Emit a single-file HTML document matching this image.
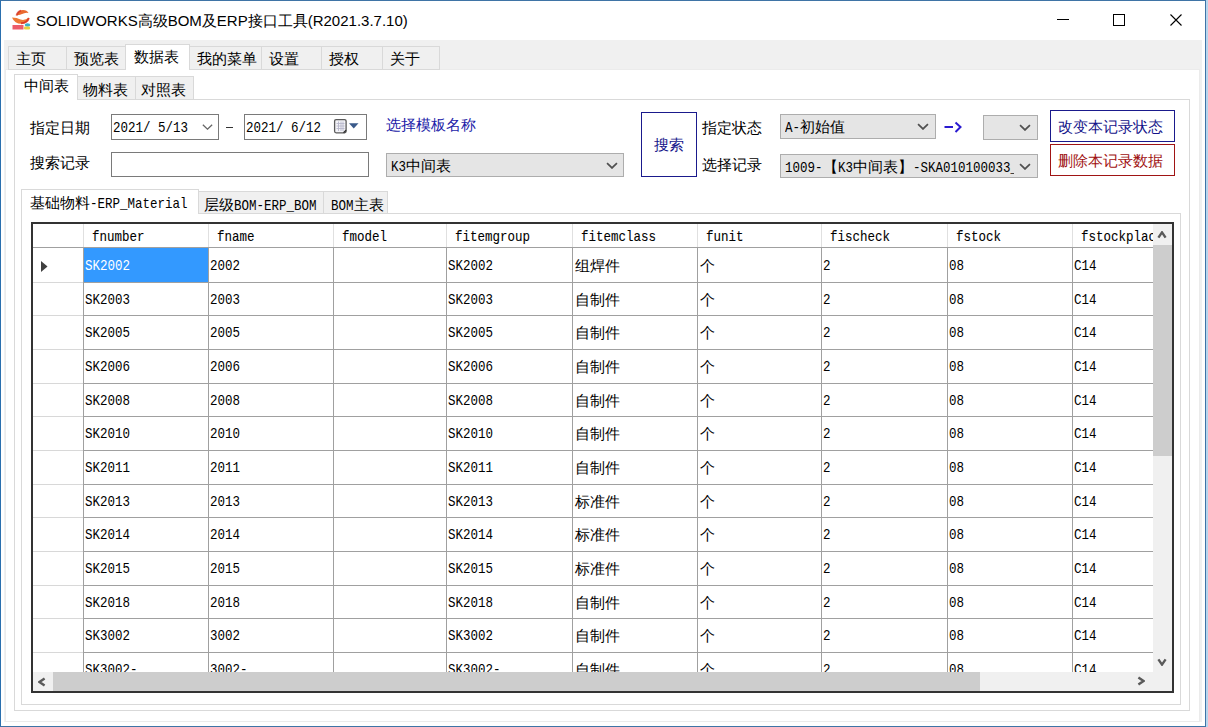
<!DOCTYPE html><html><head><meta charset="utf-8"><style>
*{box-sizing:border-box;margin:0;padding:0}
html,body{width:1208px;height:727px;overflow:hidden;background:#b8d6ee;font-family:"Liberation Sans",sans-serif;color:#000}
.a{position:absolute}
.cjk{font-size:15px;line-height:15px;white-space:nowrap}
.mono{font-family:"Liberation Mono",monospace;white-space:nowrap}
.tab{position:absolute;background:#f0f0f0;border:1px solid #d9d9d9;border-bottom:none}
.tabsel{position:absolute;background:#fff;border:1px solid #d9d9d9;border-bottom:none}
.combo{position:absolute;background:#e5e5e5;border:1px solid #adadad}
.chev{position:absolute;width:7px;height:7px;border-right:1.3px solid #555;border-bottom:1.3px solid #555;transform:rotate(45deg)}
.vl{position:absolute;width:1px;background:#a0a0a0}
.hl{position:absolute;height:1px;background:#a0a0a0}
.cell{position:absolute;font-family:"Liberation Mono",monospace;font-size:12.5px;line-height:14px;white-space:nowrap;transform-origin:0 50%}
</style></head><body>
<div class="a" style="left:0;top:0;width:1206px;height:727px;background:#fff;border:1px solid #3f74a6;border-left-color:#2a6fae"></div>
<svg class="a" style="left:8px;top:6px" width="28" height="28" viewBox="0 0 28 28">
<path d="M8.5 9.5 Q10 4 15 4 Q19 4 20.5 7 Q18 6.5 15.5 7.5 Q12 9 8.5 9.5 Z" fill="#ea6a30"/>
<path d="M8.5 9.5 Q9.5 5.5 13 4.6" stroke="#d42a1e" stroke-width="1.8" fill="none" opacity=".75"/>
<path d="M4 11.5 Q9 11.5 12.5 13.5 Q16.5 15 21 11.5 Q20.5 17.5 13.5 17.8 Q6.5 17.8 4 11.5 Z" fill="#ee7a34"/>
<path d="M13 17.3 Q19.5 17 20.8 12" stroke="#d82a1e" stroke-width="2" fill="none" opacity=".8"/>
<rect x="4.5" y="19" width="11" height="4.5" fill="#ea4a5a" opacity=".9"/>
<ellipse cx="19.5" cy="19" rx="2.8" ry="1.8" fill="#3ab0c8"/>
<rect x="16" y="20.5" width="6" height="3" rx="1" fill="#e8d040"/>
</svg>
<div class="a" style="left:36px;top:13px;font-size:15px;line-height:15px;white-space:nowrap;color:#000">SOLIDWORKS高级BOM及ERP接口工具(R2021.3.7.10)</div>
<div class="a" style="left:1057px;top:19px;width:12px;height:1px;background:#000"></div>
<div class="a" style="left:1113px;top:14px;width:12px;height:12px;border:1px solid #000"></div>
<svg class="a" style="left:1170px;top:14px" width="12" height="12"><path d="M0.5 0.5 L11.5 11.5 M11.5 0.5 L0.5 11.5" stroke="#000" stroke-width="1.1"/></svg>
<div class="a" style="left:4px;top:40px;width:1198px;height:685px;background:#f0f0f0"></div>
<div class="a" style="left:5px;top:69px;width:1195px;height:653px;background:#fff;border:1px solid #ebebeb"></div>
<div class="a" style="left:1px;top:722px;width:1204px;height:4px;background:#fff"></div>
<div class="tab" style="left:8px;top:46px;width:59px;height:24px;border-bottom:1px solid #d9d9d9"></div>
<div class="a cjk" style="left:16px;top:51px">主页</div>
<div class="tab" style="left:66px;top:46px;width:61px;height:24px;border-bottom:1px solid #d9d9d9"></div>
<div class="a cjk" style="left:74px;top:51px">预览表</div>
<div class="tabsel" style="left:125px;top:44px;width:65px;height:26px"></div>
<div class="a cjk" style="left:134px;top:49px">数据表</div>
<div class="tab" style="left:189px;top:46px;width:73px;height:24px;border-bottom:1px solid #d9d9d9"></div>
<div class="a cjk" style="left:197px;top:51px">我的菜单</div>
<div class="tab" style="left:261px;top:46px;width:61px;height:24px;border-bottom:1px solid #d9d9d9"></div>
<div class="a cjk" style="left:269px;top:51px">设置</div>
<div class="tab" style="left:321px;top:46px;width:62px;height:24px;border-bottom:1px solid #d9d9d9"></div>
<div class="a cjk" style="left:329px;top:51px">授权</div>
<div class="tab" style="left:382px;top:46px;width:58px;height:24px;border-bottom:1px solid #d9d9d9"></div>
<div class="a cjk" style="left:390px;top:51px">关于</div>
<div class="a" style="left:14px;top:99px;width:1176px;height:612px;background:#fff;border:1px solid #d9d9d9"></div>
<div class="tabsel" style="left:14px;top:74px;width:64px;height:26px"></div>
<div class="a cjk" style="left:24px;top:78px">中间表</div>
<div class="tab" style="left:77px;top:76px;width:59px;height:24px;border-bottom:1px solid #d9d9d9"></div>
<div class="a cjk" style="left:83px;top:82px">物料表</div>
<div class="tab" style="left:135px;top:76px;width:59px;height:24px;border-bottom:1px solid #d9d9d9"></div>
<div class="a cjk" style="left:141px;top:82px">对照表</div>
<div class="a cjk" style="left:30px;top:120px">指定日期</div>
<div class="a cjk" style="left:30px;top:155px">搜索记录</div>
<div class="a" style="left:111px;top:114px;width:108px;height:26px;border:1px solid #7a7a7a;background:#fff"></div>
<div class="a" style="left:113px;top:118px;line-height:17px;white-space:pre"><span style="display:inline-block;font-family:'Liberation Mono',monospace;font-size:15px;transform:scaleX(0.8333);transform-origin:0 0;margin-right:-15.00px;">2021/ 5/13</span></div>
<svg class="a" style="left:202px;top:124px" width="11" height="6"><polyline points="0.8500000000000001,0.8500000000000001 5.5,5.15 10.15,0.8500000000000001" fill="none" stroke="#666" stroke-width="1.3"/></svg>
<div class="a" style="left:226px;top:127px;width:7px;height:1.3px;background:#333"></div>
<div class="a" style="left:244px;top:114px;width:123px;height:26px;border:1px solid #7a7a7a;background:#fff"></div>
<div class="a" style="left:246px;top:118px;line-height:17px;white-space:pre"><span style="display:inline-block;font-family:'Liberation Mono',monospace;font-size:15px;transform:scaleX(0.8333);transform-origin:0 0;margin-right:-15.00px;">2021/ 6/12</span></div>
<svg class="a" style="left:333px;top:118px" width="16" height="17"><rect x="1.6" y="1.6" width="11.5" height="13.2" rx="1.5" fill="#f4f4f8" stroke="#5a5a5a" stroke-width="1.3"/><path d="M3.5 5.5H11.5M3.5 8H11.5M3.5 10.5H11.5M5.5 3.5V13M8 3.5V13M10 3.5V13" stroke="#b8b8cc" stroke-width="0.9"/><path d="M10.5 14.8L13.1 12.2" stroke="#333" stroke-width="1.4"/></svg>
<svg class="a" style="left:349px;top:123px" width="10" height="6"><path d="M0 0.3 L9.5 0.3 L4.75 5.5 Z" fill="#3a5a8a"/></svg>
<div class="a" style="left:111px;top:152px;width:258px;height:25px;border:1px solid #7a7a7a;background:#fff"></div>
<div class="a cjk" style="left:386px;top:117px;color:#1c1ca8">选择模板名称</div>
<div class="combo" style="left:386px;top:153px;width:238px;height:24px"></div>
<div class="a" style="left:391px;top:157px;font-size:15px;line-height:17px;white-space:pre"><span style="display:inline-block;font-family:'Liberation Mono',monospace;font-size:15px;transform:scaleX(0.8333);transform-origin:0 0;margin-right:-3.00px;">K3</span>中间表</div>
<svg class="a" style="left:606px;top:162px" width="12" height="7"><polyline points="1.05,1.05 6.0,5.95 10.95,1.05" fill="none" stroke="#505050" stroke-width="1.7"/></svg>
<div class="a" style="left:641px;top:112px;width:56px;height:65px;border:1px solid #1a1a8c;background:#fff"></div>
<div class="a cjk" style="left:654px;top:137px;color:#14148a">搜索</div>
<div class="a cjk" style="left:702px;top:120px">指定状态</div>
<div class="a cjk" style="left:702px;top:157px">选择记录</div>
<div class="combo" style="left:780px;top:114px;width:156px;height:25px"></div>
<div class="a" style="left:785px;top:119px;font-size:15px;line-height:15px;white-space:nowrap"><span style="display:inline-block;font-family:'Liberation Mono',monospace;font-size:15px;transform:scaleX(0.8333);transform-origin:0 0;margin-right:-3.00px;">A-</span>初始值</div>
<svg class="a" style="left:917px;top:123px" width="12" height="7"><polyline points="1.05,1.05 6.0,5.95 10.95,1.05" fill="none" stroke="#505050" stroke-width="1.7"/></svg>
<svg class="a" style="left:943px;top:121px" width="20" height="13"><path d="M1.5 6 H10" stroke="#2a1ad0" stroke-width="2"/><polyline points="12.5,1.5 17.5,6 12.5,11" fill="none" stroke="#2a1ad0" stroke-width="2"/></svg>
<div class="combo" style="left:983px;top:115px;width:55px;height:25px"></div>
<svg class="a" style="left:1019px;top:124px" width="12" height="7"><polyline points="1.05,1.05 6.0,5.95 10.95,1.05" fill="none" stroke="#505050" stroke-width="1.7"/></svg>
<div class="combo" style="left:780px;top:154px;width:258px;height:24px"></div>
<div class="a" style="left:785px;top:159px;width:229px;overflow:hidden;font-size:15px;line-height:15px;white-space:nowrap"><span style="display:inline-block;font-family:'Liberation Mono',monospace;font-size:15px;transform:scaleX(0.8333);transform-origin:0 0;margin-right:-7.50px;">1009-</span>【<span style="display:inline-block;font-family:'Liberation Mono',monospace;font-size:15px;transform:scaleX(0.8333);transform-origin:0 0;margin-right:-3.00px;">K3</span>中间表】<span style="display:inline-block;font-family:'Liberation Mono',monospace;font-size:15px;transform:scaleX(0.8333);transform-origin:0 0;margin-right:-21.00px;">-SKA010100033_</span></div>
<svg class="a" style="left:1019px;top:163px" width="12" height="7"><polyline points="1.05,1.05 6.0,5.95 10.95,1.05" fill="none" stroke="#505050" stroke-width="1.7"/></svg>
<div class="a" style="left:1050px;top:110px;width:125px;height:32px;border:1px solid #1a1a8c;background:#fff"></div>
<div class="a cjk" style="left:1058px;top:119px;color:#14148a">改变本记录状态</div>
<div class="a" style="left:1050px;top:144px;width:125px;height:32px;border:1px solid #a01414;background:#fff"></div>
<div class="a cjk" style="left:1058px;top:153px;color:#a01010">删除本记录数据</div>
<div class="a" style="left:21px;top:213px;width:1160px;height:492px;background:#fff;border:1px solid #d9d9d9"></div>
<div class="tabsel" style="left:21px;top:189px;width:178px;height:25px"></div>
<div class="a" style="left:30px;top:195px;font-size:15px;line-height:15px;white-space:nowrap">基础物料<span style="display:inline-block;font-family:'Liberation Mono',monospace;font-size:15px;transform:scaleX(0.8333);transform-origin:0 0;margin-right:-19.50px;">-ERP_Material</span></div>
<div class="tab" style="left:198px;top:191px;width:126px;height:23px;border-bottom:1px solid #d9d9d9"></div>
<div class="a" style="left:204px;top:197px;font-size:15px;line-height:15px;white-space:nowrap">层级<span style="display:inline-block;font-family:'Liberation Mono',monospace;font-size:15px;transform:scaleX(0.8333);transform-origin:0 0;margin-right:-16.50px;">BOM-ERP_BOM</span></div>
<div class="tab" style="left:323px;top:191px;width:65px;height:23px;border-bottom:1px solid #d9d9d9"></div>
<div class="a" style="left:331px;top:197px;font-size:15px;line-height:15px;white-space:nowrap"><span style="display:inline-block;font-family:'Liberation Mono',monospace;font-size:15px;transform:scaleX(0.8333);transform-origin:0 0;margin-right:-4.50px;">BOM</span>主表</div>
<div class="a" style="left:31px;top:222px;width:1143px;height:471px;background:#fff;border:2px solid #333"></div>
<div class="vl" style="left:83px;top:224px;height:24px;background:#e0e0e0"></div>
<div class="vl" style="left:208px;top:224px;height:24px;background:#e0e0e0"></div>
<div class="vl" style="left:333px;top:224px;height:24px;background:#e0e0e0"></div>
<div class="vl" style="left:446px;top:224px;height:24px;background:#e0e0e0"></div>
<div class="vl" style="left:572px;top:224px;height:24px;background:#e0e0e0"></div>
<div class="vl" style="left:697px;top:224px;height:24px;background:#e0e0e0"></div>
<div class="vl" style="left:821px;top:224px;height:24px;background:#e0e0e0"></div>
<div class="vl" style="left:947px;top:224px;height:24px;background:#e0e0e0"></div>
<div class="vl" style="left:1072px;top:224px;height:24px;background:#e0e0e0"></div>
<div class="hl" style="left:33px;top:247px;width:1120px;background:#a0a0a0"></div>
<div class="a" style="left:92px;top:227px;line-height:17px;white-space:pre"><span style="display:inline-block;font-family:'Liberation Mono',monospace;font-size:15px;transform:scaleX(0.8333);transform-origin:0 0;margin-right:-10.50px;font-weight:normal;-webkit-text-stroke:0.1px #000">fnumber</span></div>
<div class="a" style="left:217px;top:227px;line-height:17px;white-space:pre"><span style="display:inline-block;font-family:'Liberation Mono',monospace;font-size:15px;transform:scaleX(0.8333);transform-origin:0 0;margin-right:-7.50px;font-weight:normal;-webkit-text-stroke:0.1px #000">fname</span></div>
<div class="a" style="left:342px;top:227px;line-height:17px;white-space:pre"><span style="display:inline-block;font-family:'Liberation Mono',monospace;font-size:15px;transform:scaleX(0.8333);transform-origin:0 0;margin-right:-9.00px;font-weight:normal;-webkit-text-stroke:0.1px #000">fmodel</span></div>
<div class="a" style="left:455px;top:227px;line-height:17px;white-space:pre"><span style="display:inline-block;font-family:'Liberation Mono',monospace;font-size:15px;transform:scaleX(0.8333);transform-origin:0 0;margin-right:-15.00px;font-weight:normal;-webkit-text-stroke:0.1px #000">fitemgroup</span></div>
<div class="a" style="left:581px;top:227px;line-height:17px;white-space:pre"><span style="display:inline-block;font-family:'Liberation Mono',monospace;font-size:15px;transform:scaleX(0.8333);transform-origin:0 0;margin-right:-15.00px;font-weight:normal;-webkit-text-stroke:0.1px #000">fitemclass</span></div>
<div class="a" style="left:706px;top:227px;line-height:17px;white-space:pre"><span style="display:inline-block;font-family:'Liberation Mono',monospace;font-size:15px;transform:scaleX(0.8333);transform-origin:0 0;margin-right:-7.50px;font-weight:normal;-webkit-text-stroke:0.1px #000">funit</span></div>
<div class="a" style="left:830px;top:227px;line-height:17px;white-space:pre"><span style="display:inline-block;font-family:'Liberation Mono',monospace;font-size:15px;transform:scaleX(0.8333);transform-origin:0 0;margin-right:-12.00px;font-weight:normal;-webkit-text-stroke:0.1px #000">fischeck</span></div>
<div class="a" style="left:956px;top:227px;line-height:17px;white-space:pre"><span style="display:inline-block;font-family:'Liberation Mono',monospace;font-size:15px;transform:scaleX(0.8333);transform-origin:0 0;margin-right:-9.00px;font-weight:normal;-webkit-text-stroke:0.1px #000">fstock</span></div>
<div class="a" style="left:1081px;top:227px;line-height:17px;white-space:pre"><span style="display:inline-block;font-family:'Liberation Mono',monospace;font-size:15px;transform:scaleX(0.8333);transform-origin:0 0;margin-right:-16.50px;font-weight:normal;-webkit-text-stroke:0.1px #000">fstockplace</span></div>
<div class="a" style="left:83px;top:248px;width:125px;height:34px;background:#3399ff"></div>
<svg class="a" style="left:41px;top:261px" width="7" height="11"><path d="M0 0 L6.5 5.5 L0 11 Z" fill="#404040"/></svg>
<div class="a" style="left:85px;top:256px;line-height:17px;white-space:pre;color:#fff"><span style="display:inline-block;font-family:'Liberation Mono',monospace;font-size:15px;transform:scaleX(0.8333);transform-origin:0 0;margin-right:-9.00px;">SK2002</span></div>
<div class="a" style="left:210px;top:256px;line-height:17px;white-space:pre;color:#000"><span style="display:inline-block;font-family:'Liberation Mono',monospace;font-size:15px;transform:scaleX(0.8333);transform-origin:0 0;margin-right:-6.00px;">2002</span></div>
<div class="a" style="left:335px;top:256px;line-height:17px;white-space:pre;color:#000"><span style="display:inline-block;font-family:'Liberation Mono',monospace;font-size:15px;transform:scaleX(0.8333);transform-origin:0 0;margin-right:-0.00px;"></span></div>
<div class="a" style="left:448px;top:256px;line-height:17px;white-space:pre;color:#000"><span style="display:inline-block;font-family:'Liberation Mono',monospace;font-size:15px;transform:scaleX(0.8333);transform-origin:0 0;margin-right:-9.00px;">SK2002</span></div>
<div class="a cjk" style="left:575px;top:258px;color:#000">组焊件</div>
<div class="a cjk" style="left:700px;top:258px;color:#000">个</div>
<div class="a" style="left:823px;top:256px;line-height:17px;white-space:pre;color:#000"><span style="display:inline-block;font-family:'Liberation Mono',monospace;font-size:15px;transform:scaleX(0.8333);transform-origin:0 0;margin-right:-1.50px;">2</span></div>
<div class="a" style="left:949px;top:256px;line-height:17px;white-space:pre;color:#000"><span style="display:inline-block;font-family:'Liberation Mono',monospace;font-size:15px;transform:scaleX(0.8333);transform-origin:0 0;margin-right:-3.00px;">08</span></div>
<div class="a" style="left:1074px;top:256px;line-height:17px;white-space:pre;color:#000"><span style="display:inline-block;font-family:'Liberation Mono',monospace;font-size:15px;transform:scaleX(0.8333);transform-origin:0 0;margin-right:-4.50px;">C14</span></div>
<div class="hl" style="left:33px;top:282px;width:50px;background:#d8d8d8"></div>
<div class="hl" style="left:83px;top:282px;width:1070px"></div>
<div class="a" style="left:85px;top:290px;line-height:17px;white-space:pre;color:#000"><span style="display:inline-block;font-family:'Liberation Mono',monospace;font-size:15px;transform:scaleX(0.8333);transform-origin:0 0;margin-right:-9.00px;">SK2003</span></div>
<div class="a" style="left:210px;top:290px;line-height:17px;white-space:pre;color:#000"><span style="display:inline-block;font-family:'Liberation Mono',monospace;font-size:15px;transform:scaleX(0.8333);transform-origin:0 0;margin-right:-6.00px;">2003</span></div>
<div class="a" style="left:335px;top:290px;line-height:17px;white-space:pre;color:#000"><span style="display:inline-block;font-family:'Liberation Mono',monospace;font-size:15px;transform:scaleX(0.8333);transform-origin:0 0;margin-right:-0.00px;"></span></div>
<div class="a" style="left:448px;top:290px;line-height:17px;white-space:pre;color:#000"><span style="display:inline-block;font-family:'Liberation Mono',monospace;font-size:15px;transform:scaleX(0.8333);transform-origin:0 0;margin-right:-9.00px;">SK2003</span></div>
<div class="a cjk" style="left:575px;top:292px;color:#000">自制件</div>
<div class="a cjk" style="left:700px;top:292px;color:#000">个</div>
<div class="a" style="left:823px;top:290px;line-height:17px;white-space:pre;color:#000"><span style="display:inline-block;font-family:'Liberation Mono',monospace;font-size:15px;transform:scaleX(0.8333);transform-origin:0 0;margin-right:-1.50px;">2</span></div>
<div class="a" style="left:949px;top:290px;line-height:17px;white-space:pre;color:#000"><span style="display:inline-block;font-family:'Liberation Mono',monospace;font-size:15px;transform:scaleX(0.8333);transform-origin:0 0;margin-right:-3.00px;">08</span></div>
<div class="a" style="left:1074px;top:290px;line-height:17px;white-space:pre;color:#000"><span style="display:inline-block;font-family:'Liberation Mono',monospace;font-size:15px;transform:scaleX(0.8333);transform-origin:0 0;margin-right:-4.50px;">C14</span></div>
<div class="hl" style="left:33px;top:315px;width:50px;background:#d8d8d8"></div>
<div class="hl" style="left:83px;top:315px;width:1070px"></div>
<div class="a" style="left:85px;top:323px;line-height:17px;white-space:pre;color:#000"><span style="display:inline-block;font-family:'Liberation Mono',monospace;font-size:15px;transform:scaleX(0.8333);transform-origin:0 0;margin-right:-9.00px;">SK2005</span></div>
<div class="a" style="left:210px;top:323px;line-height:17px;white-space:pre;color:#000"><span style="display:inline-block;font-family:'Liberation Mono',monospace;font-size:15px;transform:scaleX(0.8333);transform-origin:0 0;margin-right:-6.00px;">2005</span></div>
<div class="a" style="left:335px;top:323px;line-height:17px;white-space:pre;color:#000"><span style="display:inline-block;font-family:'Liberation Mono',monospace;font-size:15px;transform:scaleX(0.8333);transform-origin:0 0;margin-right:-0.00px;"></span></div>
<div class="a" style="left:448px;top:323px;line-height:17px;white-space:pre;color:#000"><span style="display:inline-block;font-family:'Liberation Mono',monospace;font-size:15px;transform:scaleX(0.8333);transform-origin:0 0;margin-right:-9.00px;">SK2005</span></div>
<div class="a cjk" style="left:575px;top:325px;color:#000">自制件</div>
<div class="a cjk" style="left:700px;top:325px;color:#000">个</div>
<div class="a" style="left:823px;top:323px;line-height:17px;white-space:pre;color:#000"><span style="display:inline-block;font-family:'Liberation Mono',monospace;font-size:15px;transform:scaleX(0.8333);transform-origin:0 0;margin-right:-1.50px;">2</span></div>
<div class="a" style="left:949px;top:323px;line-height:17px;white-space:pre;color:#000"><span style="display:inline-block;font-family:'Liberation Mono',monospace;font-size:15px;transform:scaleX(0.8333);transform-origin:0 0;margin-right:-3.00px;">08</span></div>
<div class="a" style="left:1074px;top:323px;line-height:17px;white-space:pre;color:#000"><span style="display:inline-block;font-family:'Liberation Mono',monospace;font-size:15px;transform:scaleX(0.8333);transform-origin:0 0;margin-right:-4.50px;">C14</span></div>
<div class="hl" style="left:33px;top:349px;width:50px;background:#d8d8d8"></div>
<div class="hl" style="left:83px;top:349px;width:1070px"></div>
<div class="a" style="left:85px;top:357px;line-height:17px;white-space:pre;color:#000"><span style="display:inline-block;font-family:'Liberation Mono',monospace;font-size:15px;transform:scaleX(0.8333);transform-origin:0 0;margin-right:-9.00px;">SK2006</span></div>
<div class="a" style="left:210px;top:357px;line-height:17px;white-space:pre;color:#000"><span style="display:inline-block;font-family:'Liberation Mono',monospace;font-size:15px;transform:scaleX(0.8333);transform-origin:0 0;margin-right:-6.00px;">2006</span></div>
<div class="a" style="left:335px;top:357px;line-height:17px;white-space:pre;color:#000"><span style="display:inline-block;font-family:'Liberation Mono',monospace;font-size:15px;transform:scaleX(0.8333);transform-origin:0 0;margin-right:-0.00px;"></span></div>
<div class="a" style="left:448px;top:357px;line-height:17px;white-space:pre;color:#000"><span style="display:inline-block;font-family:'Liberation Mono',monospace;font-size:15px;transform:scaleX(0.8333);transform-origin:0 0;margin-right:-9.00px;">SK2006</span></div>
<div class="a cjk" style="left:575px;top:359px;color:#000">自制件</div>
<div class="a cjk" style="left:700px;top:359px;color:#000">个</div>
<div class="a" style="left:823px;top:357px;line-height:17px;white-space:pre;color:#000"><span style="display:inline-block;font-family:'Liberation Mono',monospace;font-size:15px;transform:scaleX(0.8333);transform-origin:0 0;margin-right:-1.50px;">2</span></div>
<div class="a" style="left:949px;top:357px;line-height:17px;white-space:pre;color:#000"><span style="display:inline-block;font-family:'Liberation Mono',monospace;font-size:15px;transform:scaleX(0.8333);transform-origin:0 0;margin-right:-3.00px;">08</span></div>
<div class="a" style="left:1074px;top:357px;line-height:17px;white-space:pre;color:#000"><span style="display:inline-block;font-family:'Liberation Mono',monospace;font-size:15px;transform:scaleX(0.8333);transform-origin:0 0;margin-right:-4.50px;">C14</span></div>
<div class="hl" style="left:33px;top:383px;width:50px;background:#d8d8d8"></div>
<div class="hl" style="left:83px;top:383px;width:1070px"></div>
<div class="a" style="left:85px;top:391px;line-height:17px;white-space:pre;color:#000"><span style="display:inline-block;font-family:'Liberation Mono',monospace;font-size:15px;transform:scaleX(0.8333);transform-origin:0 0;margin-right:-9.00px;">SK2008</span></div>
<div class="a" style="left:210px;top:391px;line-height:17px;white-space:pre;color:#000"><span style="display:inline-block;font-family:'Liberation Mono',monospace;font-size:15px;transform:scaleX(0.8333);transform-origin:0 0;margin-right:-6.00px;">2008</span></div>
<div class="a" style="left:335px;top:391px;line-height:17px;white-space:pre;color:#000"><span style="display:inline-block;font-family:'Liberation Mono',monospace;font-size:15px;transform:scaleX(0.8333);transform-origin:0 0;margin-right:-0.00px;"></span></div>
<div class="a" style="left:448px;top:391px;line-height:17px;white-space:pre;color:#000"><span style="display:inline-block;font-family:'Liberation Mono',monospace;font-size:15px;transform:scaleX(0.8333);transform-origin:0 0;margin-right:-9.00px;">SK2008</span></div>
<div class="a cjk" style="left:575px;top:393px;color:#000">自制件</div>
<div class="a cjk" style="left:700px;top:393px;color:#000">个</div>
<div class="a" style="left:823px;top:391px;line-height:17px;white-space:pre;color:#000"><span style="display:inline-block;font-family:'Liberation Mono',monospace;font-size:15px;transform:scaleX(0.8333);transform-origin:0 0;margin-right:-1.50px;">2</span></div>
<div class="a" style="left:949px;top:391px;line-height:17px;white-space:pre;color:#000"><span style="display:inline-block;font-family:'Liberation Mono',monospace;font-size:15px;transform:scaleX(0.8333);transform-origin:0 0;margin-right:-3.00px;">08</span></div>
<div class="a" style="left:1074px;top:391px;line-height:17px;white-space:pre;color:#000"><span style="display:inline-block;font-family:'Liberation Mono',monospace;font-size:15px;transform:scaleX(0.8333);transform-origin:0 0;margin-right:-4.50px;">C14</span></div>
<div class="hl" style="left:33px;top:416px;width:50px;background:#d8d8d8"></div>
<div class="hl" style="left:83px;top:416px;width:1070px"></div>
<div class="a" style="left:85px;top:424px;line-height:17px;white-space:pre;color:#000"><span style="display:inline-block;font-family:'Liberation Mono',monospace;font-size:15px;transform:scaleX(0.8333);transform-origin:0 0;margin-right:-9.00px;">SK2010</span></div>
<div class="a" style="left:210px;top:424px;line-height:17px;white-space:pre;color:#000"><span style="display:inline-block;font-family:'Liberation Mono',monospace;font-size:15px;transform:scaleX(0.8333);transform-origin:0 0;margin-right:-6.00px;">2010</span></div>
<div class="a" style="left:335px;top:424px;line-height:17px;white-space:pre;color:#000"><span style="display:inline-block;font-family:'Liberation Mono',monospace;font-size:15px;transform:scaleX(0.8333);transform-origin:0 0;margin-right:-0.00px;"></span></div>
<div class="a" style="left:448px;top:424px;line-height:17px;white-space:pre;color:#000"><span style="display:inline-block;font-family:'Liberation Mono',monospace;font-size:15px;transform:scaleX(0.8333);transform-origin:0 0;margin-right:-9.00px;">SK2010</span></div>
<div class="a cjk" style="left:575px;top:426px;color:#000">自制件</div>
<div class="a cjk" style="left:700px;top:426px;color:#000">个</div>
<div class="a" style="left:823px;top:424px;line-height:17px;white-space:pre;color:#000"><span style="display:inline-block;font-family:'Liberation Mono',monospace;font-size:15px;transform:scaleX(0.8333);transform-origin:0 0;margin-right:-1.50px;">2</span></div>
<div class="a" style="left:949px;top:424px;line-height:17px;white-space:pre;color:#000"><span style="display:inline-block;font-family:'Liberation Mono',monospace;font-size:15px;transform:scaleX(0.8333);transform-origin:0 0;margin-right:-3.00px;">08</span></div>
<div class="a" style="left:1074px;top:424px;line-height:17px;white-space:pre;color:#000"><span style="display:inline-block;font-family:'Liberation Mono',monospace;font-size:15px;transform:scaleX(0.8333);transform-origin:0 0;margin-right:-4.50px;">C14</span></div>
<div class="hl" style="left:33px;top:450px;width:50px;background:#d8d8d8"></div>
<div class="hl" style="left:83px;top:450px;width:1070px"></div>
<div class="a" style="left:85px;top:458px;line-height:17px;white-space:pre;color:#000"><span style="display:inline-block;font-family:'Liberation Mono',monospace;font-size:15px;transform:scaleX(0.8333);transform-origin:0 0;margin-right:-9.00px;">SK2011</span></div>
<div class="a" style="left:210px;top:458px;line-height:17px;white-space:pre;color:#000"><span style="display:inline-block;font-family:'Liberation Mono',monospace;font-size:15px;transform:scaleX(0.8333);transform-origin:0 0;margin-right:-6.00px;">2011</span></div>
<div class="a" style="left:335px;top:458px;line-height:17px;white-space:pre;color:#000"><span style="display:inline-block;font-family:'Liberation Mono',monospace;font-size:15px;transform:scaleX(0.8333);transform-origin:0 0;margin-right:-0.00px;"></span></div>
<div class="a" style="left:448px;top:458px;line-height:17px;white-space:pre;color:#000"><span style="display:inline-block;font-family:'Liberation Mono',monospace;font-size:15px;transform:scaleX(0.8333);transform-origin:0 0;margin-right:-9.00px;">SK2011</span></div>
<div class="a cjk" style="left:575px;top:460px;color:#000">自制件</div>
<div class="a cjk" style="left:700px;top:460px;color:#000">个</div>
<div class="a" style="left:823px;top:458px;line-height:17px;white-space:pre;color:#000"><span style="display:inline-block;font-family:'Liberation Mono',monospace;font-size:15px;transform:scaleX(0.8333);transform-origin:0 0;margin-right:-1.50px;">2</span></div>
<div class="a" style="left:949px;top:458px;line-height:17px;white-space:pre;color:#000"><span style="display:inline-block;font-family:'Liberation Mono',monospace;font-size:15px;transform:scaleX(0.8333);transform-origin:0 0;margin-right:-3.00px;">08</span></div>
<div class="a" style="left:1074px;top:458px;line-height:17px;white-space:pre;color:#000"><span style="display:inline-block;font-family:'Liberation Mono',monospace;font-size:15px;transform:scaleX(0.8333);transform-origin:0 0;margin-right:-4.50px;">C14</span></div>
<div class="hl" style="left:33px;top:484px;width:50px;background:#d8d8d8"></div>
<div class="hl" style="left:83px;top:484px;width:1070px"></div>
<div class="a" style="left:85px;top:492px;line-height:17px;white-space:pre;color:#000"><span style="display:inline-block;font-family:'Liberation Mono',monospace;font-size:15px;transform:scaleX(0.8333);transform-origin:0 0;margin-right:-9.00px;">SK2013</span></div>
<div class="a" style="left:210px;top:492px;line-height:17px;white-space:pre;color:#000"><span style="display:inline-block;font-family:'Liberation Mono',monospace;font-size:15px;transform:scaleX(0.8333);transform-origin:0 0;margin-right:-6.00px;">2013</span></div>
<div class="a" style="left:335px;top:492px;line-height:17px;white-space:pre;color:#000"><span style="display:inline-block;font-family:'Liberation Mono',monospace;font-size:15px;transform:scaleX(0.8333);transform-origin:0 0;margin-right:-0.00px;"></span></div>
<div class="a" style="left:448px;top:492px;line-height:17px;white-space:pre;color:#000"><span style="display:inline-block;font-family:'Liberation Mono',monospace;font-size:15px;transform:scaleX(0.8333);transform-origin:0 0;margin-right:-9.00px;">SK2013</span></div>
<div class="a cjk" style="left:575px;top:494px;color:#000">标准件</div>
<div class="a cjk" style="left:700px;top:494px;color:#000">个</div>
<div class="a" style="left:823px;top:492px;line-height:17px;white-space:pre;color:#000"><span style="display:inline-block;font-family:'Liberation Mono',monospace;font-size:15px;transform:scaleX(0.8333);transform-origin:0 0;margin-right:-1.50px;">2</span></div>
<div class="a" style="left:949px;top:492px;line-height:17px;white-space:pre;color:#000"><span style="display:inline-block;font-family:'Liberation Mono',monospace;font-size:15px;transform:scaleX(0.8333);transform-origin:0 0;margin-right:-3.00px;">08</span></div>
<div class="a" style="left:1074px;top:492px;line-height:17px;white-space:pre;color:#000"><span style="display:inline-block;font-family:'Liberation Mono',monospace;font-size:15px;transform:scaleX(0.8333);transform-origin:0 0;margin-right:-4.50px;">C14</span></div>
<div class="hl" style="left:33px;top:517px;width:50px;background:#d8d8d8"></div>
<div class="hl" style="left:83px;top:517px;width:1070px"></div>
<div class="a" style="left:85px;top:525px;line-height:17px;white-space:pre;color:#000"><span style="display:inline-block;font-family:'Liberation Mono',monospace;font-size:15px;transform:scaleX(0.8333);transform-origin:0 0;margin-right:-9.00px;">SK2014</span></div>
<div class="a" style="left:210px;top:525px;line-height:17px;white-space:pre;color:#000"><span style="display:inline-block;font-family:'Liberation Mono',monospace;font-size:15px;transform:scaleX(0.8333);transform-origin:0 0;margin-right:-6.00px;">2014</span></div>
<div class="a" style="left:335px;top:525px;line-height:17px;white-space:pre;color:#000"><span style="display:inline-block;font-family:'Liberation Mono',monospace;font-size:15px;transform:scaleX(0.8333);transform-origin:0 0;margin-right:-0.00px;"></span></div>
<div class="a" style="left:448px;top:525px;line-height:17px;white-space:pre;color:#000"><span style="display:inline-block;font-family:'Liberation Mono',monospace;font-size:15px;transform:scaleX(0.8333);transform-origin:0 0;margin-right:-9.00px;">SK2014</span></div>
<div class="a cjk" style="left:575px;top:527px;color:#000">标准件</div>
<div class="a cjk" style="left:700px;top:527px;color:#000">个</div>
<div class="a" style="left:823px;top:525px;line-height:17px;white-space:pre;color:#000"><span style="display:inline-block;font-family:'Liberation Mono',monospace;font-size:15px;transform:scaleX(0.8333);transform-origin:0 0;margin-right:-1.50px;">2</span></div>
<div class="a" style="left:949px;top:525px;line-height:17px;white-space:pre;color:#000"><span style="display:inline-block;font-family:'Liberation Mono',monospace;font-size:15px;transform:scaleX(0.8333);transform-origin:0 0;margin-right:-3.00px;">08</span></div>
<div class="a" style="left:1074px;top:525px;line-height:17px;white-space:pre;color:#000"><span style="display:inline-block;font-family:'Liberation Mono',monospace;font-size:15px;transform:scaleX(0.8333);transform-origin:0 0;margin-right:-4.50px;">C14</span></div>
<div class="hl" style="left:33px;top:551px;width:50px;background:#d8d8d8"></div>
<div class="hl" style="left:83px;top:551px;width:1070px"></div>
<div class="a" style="left:85px;top:559px;line-height:17px;white-space:pre;color:#000"><span style="display:inline-block;font-family:'Liberation Mono',monospace;font-size:15px;transform:scaleX(0.8333);transform-origin:0 0;margin-right:-9.00px;">SK2015</span></div>
<div class="a" style="left:210px;top:559px;line-height:17px;white-space:pre;color:#000"><span style="display:inline-block;font-family:'Liberation Mono',monospace;font-size:15px;transform:scaleX(0.8333);transform-origin:0 0;margin-right:-6.00px;">2015</span></div>
<div class="a" style="left:335px;top:559px;line-height:17px;white-space:pre;color:#000"><span style="display:inline-block;font-family:'Liberation Mono',monospace;font-size:15px;transform:scaleX(0.8333);transform-origin:0 0;margin-right:-0.00px;"></span></div>
<div class="a" style="left:448px;top:559px;line-height:17px;white-space:pre;color:#000"><span style="display:inline-block;font-family:'Liberation Mono',monospace;font-size:15px;transform:scaleX(0.8333);transform-origin:0 0;margin-right:-9.00px;">SK2015</span></div>
<div class="a cjk" style="left:575px;top:561px;color:#000">标准件</div>
<div class="a cjk" style="left:700px;top:561px;color:#000">个</div>
<div class="a" style="left:823px;top:559px;line-height:17px;white-space:pre;color:#000"><span style="display:inline-block;font-family:'Liberation Mono',monospace;font-size:15px;transform:scaleX(0.8333);transform-origin:0 0;margin-right:-1.50px;">2</span></div>
<div class="a" style="left:949px;top:559px;line-height:17px;white-space:pre;color:#000"><span style="display:inline-block;font-family:'Liberation Mono',monospace;font-size:15px;transform:scaleX(0.8333);transform-origin:0 0;margin-right:-3.00px;">08</span></div>
<div class="a" style="left:1074px;top:559px;line-height:17px;white-space:pre;color:#000"><span style="display:inline-block;font-family:'Liberation Mono',monospace;font-size:15px;transform:scaleX(0.8333);transform-origin:0 0;margin-right:-4.50px;">C14</span></div>
<div class="hl" style="left:33px;top:585px;width:50px;background:#d8d8d8"></div>
<div class="hl" style="left:83px;top:585px;width:1070px"></div>
<div class="a" style="left:85px;top:593px;line-height:17px;white-space:pre;color:#000"><span style="display:inline-block;font-family:'Liberation Mono',monospace;font-size:15px;transform:scaleX(0.8333);transform-origin:0 0;margin-right:-9.00px;">SK2018</span></div>
<div class="a" style="left:210px;top:593px;line-height:17px;white-space:pre;color:#000"><span style="display:inline-block;font-family:'Liberation Mono',monospace;font-size:15px;transform:scaleX(0.8333);transform-origin:0 0;margin-right:-6.00px;">2018</span></div>
<div class="a" style="left:335px;top:593px;line-height:17px;white-space:pre;color:#000"><span style="display:inline-block;font-family:'Liberation Mono',monospace;font-size:15px;transform:scaleX(0.8333);transform-origin:0 0;margin-right:-0.00px;"></span></div>
<div class="a" style="left:448px;top:593px;line-height:17px;white-space:pre;color:#000"><span style="display:inline-block;font-family:'Liberation Mono',monospace;font-size:15px;transform:scaleX(0.8333);transform-origin:0 0;margin-right:-9.00px;">SK2018</span></div>
<div class="a cjk" style="left:575px;top:595px;color:#000">自制件</div>
<div class="a cjk" style="left:700px;top:595px;color:#000">个</div>
<div class="a" style="left:823px;top:593px;line-height:17px;white-space:pre;color:#000"><span style="display:inline-block;font-family:'Liberation Mono',monospace;font-size:15px;transform:scaleX(0.8333);transform-origin:0 0;margin-right:-1.50px;">2</span></div>
<div class="a" style="left:949px;top:593px;line-height:17px;white-space:pre;color:#000"><span style="display:inline-block;font-family:'Liberation Mono',monospace;font-size:15px;transform:scaleX(0.8333);transform-origin:0 0;margin-right:-3.00px;">08</span></div>
<div class="a" style="left:1074px;top:593px;line-height:17px;white-space:pre;color:#000"><span style="display:inline-block;font-family:'Liberation Mono',monospace;font-size:15px;transform:scaleX(0.8333);transform-origin:0 0;margin-right:-4.50px;">C14</span></div>
<div class="hl" style="left:33px;top:618px;width:50px;background:#d8d8d8"></div>
<div class="hl" style="left:83px;top:618px;width:1070px"></div>
<div class="a" style="left:85px;top:626px;line-height:17px;white-space:pre;color:#000"><span style="display:inline-block;font-family:'Liberation Mono',monospace;font-size:15px;transform:scaleX(0.8333);transform-origin:0 0;margin-right:-9.00px;">SK3002</span></div>
<div class="a" style="left:210px;top:626px;line-height:17px;white-space:pre;color:#000"><span style="display:inline-block;font-family:'Liberation Mono',monospace;font-size:15px;transform:scaleX(0.8333);transform-origin:0 0;margin-right:-6.00px;">3002</span></div>
<div class="a" style="left:335px;top:626px;line-height:17px;white-space:pre;color:#000"><span style="display:inline-block;font-family:'Liberation Mono',monospace;font-size:15px;transform:scaleX(0.8333);transform-origin:0 0;margin-right:-0.00px;"></span></div>
<div class="a" style="left:448px;top:626px;line-height:17px;white-space:pre;color:#000"><span style="display:inline-block;font-family:'Liberation Mono',monospace;font-size:15px;transform:scaleX(0.8333);transform-origin:0 0;margin-right:-9.00px;">SK3002</span></div>
<div class="a cjk" style="left:575px;top:628px;color:#000">自制件</div>
<div class="a cjk" style="left:700px;top:628px;color:#000">个</div>
<div class="a" style="left:823px;top:626px;line-height:17px;white-space:pre;color:#000"><span style="display:inline-block;font-family:'Liberation Mono',monospace;font-size:15px;transform:scaleX(0.8333);transform-origin:0 0;margin-right:-1.50px;">2</span></div>
<div class="a" style="left:949px;top:626px;line-height:17px;white-space:pre;color:#000"><span style="display:inline-block;font-family:'Liberation Mono',monospace;font-size:15px;transform:scaleX(0.8333);transform-origin:0 0;margin-right:-3.00px;">08</span></div>
<div class="a" style="left:1074px;top:626px;line-height:17px;white-space:pre;color:#000"><span style="display:inline-block;font-family:'Liberation Mono',monospace;font-size:15px;transform:scaleX(0.8333);transform-origin:0 0;margin-right:-4.50px;">C14</span></div>
<div class="hl" style="left:33px;top:652px;width:50px;background:#d8d8d8"></div>
<div class="hl" style="left:83px;top:652px;width:1070px"></div>
<div class="a" style="left:85px;top:660px;line-height:17px;white-space:pre;color:#000"><span style="display:inline-block;font-family:'Liberation Mono',monospace;font-size:15px;transform:scaleX(0.8333);transform-origin:0 0;margin-right:-10.50px;">SK3002-</span></div>
<div class="a" style="left:210px;top:660px;line-height:17px;white-space:pre;color:#000"><span style="display:inline-block;font-family:'Liberation Mono',monospace;font-size:15px;transform:scaleX(0.8333);transform-origin:0 0;margin-right:-7.50px;">3002-</span></div>
<div class="a" style="left:335px;top:660px;line-height:17px;white-space:pre;color:#000"><span style="display:inline-block;font-family:'Liberation Mono',monospace;font-size:15px;transform:scaleX(0.8333);transform-origin:0 0;margin-right:-0.00px;"></span></div>
<div class="a" style="left:448px;top:660px;line-height:17px;white-space:pre;color:#000"><span style="display:inline-block;font-family:'Liberation Mono',monospace;font-size:15px;transform:scaleX(0.8333);transform-origin:0 0;margin-right:-10.50px;">SK3002-</span></div>
<div class="a cjk" style="left:575px;top:662px;color:#000">自制件</div>
<div class="a cjk" style="left:700px;top:662px;color:#000">个</div>
<div class="a" style="left:823px;top:660px;line-height:17px;white-space:pre;color:#000"><span style="display:inline-block;font-family:'Liberation Mono',monospace;font-size:15px;transform:scaleX(0.8333);transform-origin:0 0;margin-right:-1.50px;">2</span></div>
<div class="a" style="left:949px;top:660px;line-height:17px;white-space:pre;color:#000"><span style="display:inline-block;font-family:'Liberation Mono',monospace;font-size:15px;transform:scaleX(0.8333);transform-origin:0 0;margin-right:-3.00px;">08</span></div>
<div class="a" style="left:1074px;top:660px;line-height:17px;white-space:pre;color:#000"><span style="display:inline-block;font-family:'Liberation Mono',monospace;font-size:15px;transform:scaleX(0.8333);transform-origin:0 0;margin-right:-4.50px;">C14</span></div>
<div class="vl" style="left:208px;top:248px;height:424px"></div>
<div class="vl" style="left:333px;top:248px;height:424px"></div>
<div class="vl" style="left:446px;top:248px;height:424px"></div>
<div class="vl" style="left:572px;top:248px;height:424px"></div>
<div class="vl" style="left:697px;top:248px;height:424px"></div>
<div class="vl" style="left:821px;top:248px;height:424px"></div>
<div class="vl" style="left:947px;top:248px;height:424px"></div>
<div class="vl" style="left:1072px;top:248px;height:424px"></div>
<div class="vl" style="left:83px;top:248px;height:424px"></div>
<div class="a" style="left:1153px;top:224px;width:19px;height:448px;background:#f0f0f0"></div>
<div class="a" style="left:1153px;top:245px;width:19px;height:211px;background:#cdcdcd"></div>
<svg class="a" style="left:1157px;top:231px" width="10" height="8"><polyline points="1.4,6.6 5.0,1.4 8.6,6.6" fill="none" stroke="#5a5a5a" stroke-width="2.4"/></svg>
<svg class="a" style="left:1157px;top:658px" width="10" height="8"><polyline points="1.4,1.4 5.0,6.6 8.6,1.4" fill="none" stroke="#5a5a5a" stroke-width="2.4"/></svg>
<div class="a" style="left:33px;top:672px;width:1120px;height:19px;background:#f0f0f0"></div>
<div class="a" style="left:53px;top:672px;width:927px;height:19px;background:#cdcdcd"></div>
<svg class="a" style="left:38px;top:677px" width="8" height="10"><polyline points="6.6,1.4 1.4,5.0 6.6,8.6" fill="none" stroke="#5a5a5a" stroke-width="2.4"/></svg>
<svg class="a" style="left:1137px;top:676px" width="8" height="10"><polyline points="1.4,1.4 6.6,5.0 1.4,8.6" fill="none" stroke="#5a5a5a" stroke-width="2.4"/></svg>
<div class="a" style="left:1153px;top:672px;width:19px;height:19px;background:#f0f0f0"></div>
</body></html>
